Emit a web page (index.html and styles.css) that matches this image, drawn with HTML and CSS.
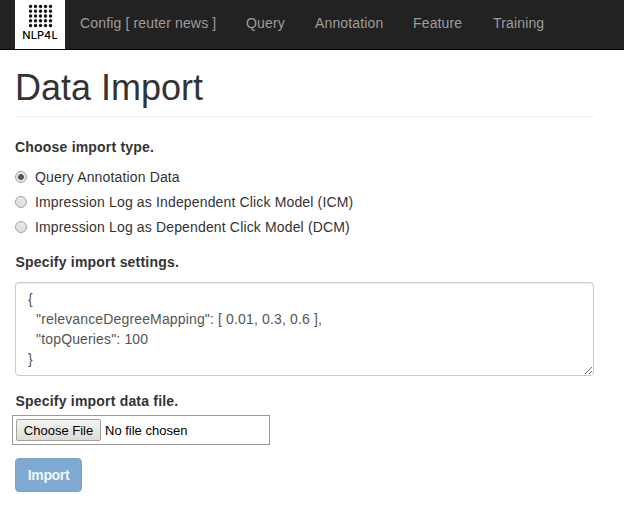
FILE: index.html
```html
<!DOCTYPE html>
<html lang="en">
<head>
<meta charset="utf-8">
<title>Data Import</title>
<link rel="stylesheet" href="styles.css">
</head>
<body>
<nav class="navbar">
  <a class="brand">
    <svg class="dots" width="25" height="24" viewBox="0 0 25 25" preserveAspectRatio="none"><defs><pattern id="d" width="5" height="5" patternUnits="userSpaceOnUse"><circle cx="2.5" cy="2.5" r="1.65"/></pattern></defs><rect width="25" height="25" fill="url(#d)"/></svg>
    <span class="brand-name">NLP4L</span>
  </a>
  <a class="nav-link config">Config [ reuter news ]</a>
  <a class="nav-link query">Query</a>
  <a class="nav-link annotation">Annotation</a>
  <a class="nav-link feature">Feature</a>
  <a class="nav-link training">Training</a>
</nav>
<main class="container">
  <h1 class="page-header">Data Import</h1>
  <p class="label">Choose import type.</p>
  <label class="option"><span class="radio checked"></span><span>Query Annotation Data</span></label>
  <label class="option"><span class="radio"></span><span class="icm">Impression Log as Independent Click Model (ICM)</span></label>
  <label class="option"><span class="radio"></span><span class="dcm">Impression Log as Dependent Click Model (DCM)</span></label>
  <p class="label settings-label">Specify import settings.</p>
  <textarea class="settings" spellcheck="false">{
  "relevanceDegreeMapping": [ 0.01, 0.3, 0.6 ],
  "topQueries": 100
}</textarea>
  <p class="label file-label">Specify import data file.</p>
  <div class="file"><span class="file-button">Choose File</span><span class="file-name">No file chosen</span></div>
  <button class="import">Import</button>
</main>
</body>
</html>
```
FILE: styles.css
```css
* { box-sizing: border-box; }
body {
  margin: 0;
  background: #fff;
  color: #333;
  font: 14px/20px "Liberation Sans", Arial, sans-serif;
  letter-spacing: .15px;
  overflow: hidden;
}
.navbar {
  display: flex;
  height: 50px;
  padding-left: 15px;
  background: #222;
  border-bottom: 1px solid #080808;
}
.brand {
  display: flex;
  flex-direction: column;
  align-items: center;
  width: 50px;
  height: 49px;
  padding-top: 4px;
  background: #fff;
  color: #000;
}
.brand-name { font: 500 11px/14px Inter, sans-serif; letter-spacing: .1px; }
.nav-link { padding: 13px 15px; color: #9d9d9d; white-space: nowrap; }
.config { width: 166px; }
.query { width: 69px; }
.annotation { width: 98px; }
.feature { width: 80px; }
.container { width: 594px; padding-left: 15px; }
.page-header {
  margin: 0 0 20px;
  height: 67px;
  padding-top: 18px;
  border-bottom: 1px solid #eee;
  font-size: 36px;
  line-height: 39px;
  font-weight: 400;
  letter-spacing: 0;
}
.label { margin: 0 0 10px; font-weight: 700; letter-spacing: .2px; }
.option { display: flex; align-items: center; gap: 8px; height: 20px; margin-bottom: 5px; }
.radio {
  width: 12px;
  height: 12px;
  border: 1px solid #a3a3a3;
  border-radius: 50%;
  background: linear-gradient(#e8e8e8, #dcdcdc);
}
.checked { background: radial-gradient(circle, #555 0 2.5px, #e4e4e4 3.3px); }
.settings-label { margin-top: 15px; }
.settings {
  display: block;
  width: 579px;
  height: 94px;
  padding: 6px 12px;
  border: 1px solid #ccc;
  border-radius: 4px;
  box-shadow: inset 0 1px 1px rgba(0, 0, 0, .075);
  color: #555;
  font: inherit;
  letter-spacing: .15px;
  overflow: hidden;
}
.file-label { margin: 15px 0 4px; }
.settings-label, .file-label { padding-left: .5px; }
.file {
  display: flex;
  align-items: center;
  width: 258px;
  height: 30px;
  margin-left: -3px;
  padding-left: 3px;
  border: 1px solid #999;
  color: #000;
  font-size: 13px;
  letter-spacing: 0;
}
.file-button {
  width: 85px;
  height: 22px;
  margin-right: 4px;
  border: 1px solid #a5a19b;
  border-radius: 2px;
  background: linear-gradient(#f4f4f3, #dddbd8);
  text-align: center;
}
.file-button, .file-name { line-height: 21px; }
.import {
  width: 67px;
  height: 34px;
  margin: 13px 0 0;
  padding: 0;
  border: 1px solid #74a5d0;
  border-radius: 4px;
  background: #7eaad1;
  color: #f0f6fb;
  font: 700 14px/20px "Liberation Sans", Arial, sans-serif;
  letter-spacing: -.35px;
}
```
